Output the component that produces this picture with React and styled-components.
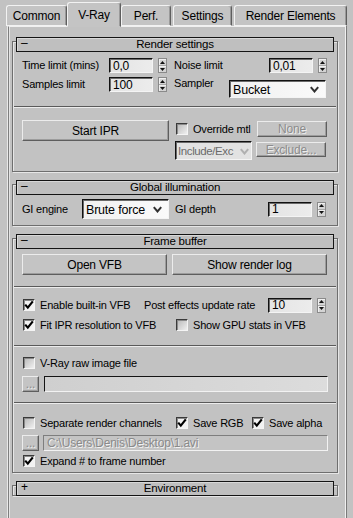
import React from 'react';
import styled, { createGlobalStyle } from 'styled-components';

const Global = createGlobalStyle`
  html, body { margin: 0; padding: 0; background: #c2c2c2; }
  body { font-family: "Liberation Sans", Arial, sans-serif; font-size: 11px; color: #000; overflow: hidden; letter-spacing: -0.2px; }
  * { box-sizing: border-box; }
`;

const Window = styled.div`
  width: 353px;
  height: 518px;
  background: #c2c2c2;
  display: flex;
  flex-direction: column;
  overflow: hidden;
`;

const TabBar = styled.div`
  display: flex;
  align-items: flex-end;
  height: 26px;
  padding-left: 5px;
  position: relative;
  z-index: 2;
`;

const Tab = styled.div`
  width: ${p => p.$w}px;
  height: ${p => (p.$active ? 25 : 21)}px;
  margin: 0 ${p => (p.$active ? -1 : 1)}px ${p => (p.$active ? -1 : 0)}px;
  display: flex;
  align-items: center;
  justify-content: center;
  padding-top: ${p => (p.$active ? 0 : 1)}px;
  font-size: 12px;
  background: #c4c4c4;
  border: 1px solid;
  border-color: #f2f2f2 #5e5e5e ${p => (p.$active ? '#c4c4c4' : '#f2f2f2')} #f2f2f2;
  border-radius: 3px 3px 0 0;
  box-shadow: inset -1px 0 0 #9a9a9a;
  position: relative;
  z-index: ${p => (p.$active ? 2 : 1)};
`;

const Panel = styled.div`
  flex: 1;
  width: 338px;
  margin-left: 8px;
  border-top: 1px solid #f0f0f0;
  border-left: 1px solid #7e7e7e;
  border-right: 1px solid #f0f0f0;
  box-shadow: inset 1px 0 0 #e4e4e4, -1px 0 0 #e8e8e8, 1px 0 0 #7a7a7a;
  padding: 10px 0 0 3px;
  display: flex;
  flex-direction: column;
`;

const Rollout = styled.section`
  position: relative;
  width: 326px;
  margin-bottom: ${p => p.$mb ?? 8}px;
  &::before {
    content: '';
    position: absolute;
    left: 0;
    right: 0;
    top: 4px;
    bottom: 0;
    border: 1px solid #6e6e6e;
    box-shadow: 1px 1px 0 #e6e6e6, inset 1px 1px 0 #e6e6e6;
    pointer-events: none;
  }
`;

const RollHeader = styled.div`
  position: relative;
  z-index: 1;
  margin: 0 4px;
  height: 15px;
  border: 1px solid #141414;
  background: #bfbfbf;
  box-shadow: inset 1px 1px 0 #d8d8d8;
  display: flex;
  align-items: center;
  justify-content: center;
  font-size: 11.5px;
  line-height: 13px;
`;

const Toggle = styled.span`
  position: absolute;
  left: 4px;
  top: -1px;
  font-size: 12px;
  font-weight: normal;
`;

const Body = styled.div`
  position: relative;
  padding: ${p => p.$pt}px 10px ${p => p.$pb}px;
  display: flex;
  flex-direction: column;
`;

const Row = styled.div`
  display: flex;
  align-items: ${p => p.$align || 'center'};
  height: ${p => p.$h || 16}px;
  margin-top: ${p => p.$mt || 0}px;
  gap: ${p => p.$gap || 0}px;
`;

const Cell = styled.div`
  display: flex;
  align-items: ${p => p.$align || 'center'};
  width: ${p => p.$w}px;
  flex: none;
  gap: ${p => p.$gap || 0}px;
  white-space: nowrap;
`;

const Col = styled.div`
  display: flex;
  flex-direction: column;
  width: ${p => p.$w}px;
  gap: ${p => p.$gap || 0}px;
  padding-top: ${p => p.$pt || 0}px;
`;

const Label = styled.span`
  display: inline-block;
  width: ${p => (p.$w ? `${p.$w}px` : 'auto')};
  flex: none;
  white-space: nowrap;
  line-height: 13px;
  color: ${p => (p.$dim ? '#808080' : '#000')};
`;

const Field = styled.div`
  width: ${p => p.$w}px;
  height: ${p => p.$h || 15}px;
  flex: none;
  border: 1px solid;
  border-color: #111 #f4f4f4 #f4f4f4 #111;
  box-shadow: inset 1px 1px 0 #6a6a6a;
  background: linear-gradient(90deg, #e4e4e4, #ececec);
  padding-left: 3px;
  display: flex;
  align-items: center;
  font-size: 12px;
  line-height: 12px;
`;

const GreyField = styled.div`
  flex: 1;
  height: ${p => p.$h || 16}px;
  border: 1px solid;
  border-color: ${p => (p.$dark ? '#151515' : '#7e7e7e')} #f2f2f2 #f2f2f2 ${p => (p.$dark ? '#151515' : '#7e7e7e')};
  background: ${p => (p.$dark ? 'linear-gradient(90deg, #cfcfcf, #dcdcdc)' : '#c4c4c4')};
  padding-left: 3px;
  display: flex;
  align-items: center;
  color: #8a8a8a;
  text-shadow: 1px 1px 0 #f2f2f2;
  font-size: 12px;
  white-space: nowrap;
  overflow: hidden;
`;

const SpinWrap = styled.div`
  width: 9px;
  height: 15px;
  flex: none;
  margin-left: 5px;
  display: flex;
  flex-direction: column;
  gap: 1px;
  border: 1px solid #8a8a8a;
  background: #a8a8a8;
`;

const SpinBtn = styled.div`
  flex: 1;
  background: #d4d4d4;
  display: flex;
  align-items: center;
  justify-content: center;
  box-shadow: inset 1px 1px 0 #f0f0f0;
`;

const SelectBox = styled.div`
  width: ${p => p.$w}px;
  height: ${p => p.$h}px;
  flex: none;
  margin-top: ${p => p.$mt || 0}px;
  border: 1px solid;
  border-color: #111 #f4f4f4 #f4f4f4 #111;
  box-shadow: inset 1px 1px 0 #6a6a6a;
  background: ${p => (p.$dim ? '#e2e2e2' : 'linear-gradient(90deg, #f0f0f0, #fafafa)')};
  color: ${p => (p.$dim ? '#6a6a6a' : '#000')};
  display: flex;
  align-items: center;
  justify-content: space-between;
  gap: 1px;
  padding: 1px ${p => (p.$dim ? 2 : 6)}px 0 ${p => (p.$dim ? 2 : 3)}px;
  font-size: ${p => (p.$dim ? 11.5 : 12.5)}px;
  letter-spacing: ${p => (p.$dim ? -0.4 : -0.2)}px;
  white-space: nowrap;
`;

const SelectText = styled.span`
  flex: 0 1 auto;
`;

const Button = styled.div`
  width: ${p => (p.$w ? `${p.$w}px` : 'auto')};
  height: ${p => p.$h || 21}px;
  flex: none;
  margin-top: ${p => p.$mt || 0}px;
  margin-left: ${p => p.$ml || 0}px;
  background: #c4c4c4;
  border: 1px solid;
  border-color: #ececec #5e5e5e #5e5e5e #ececec;
  box-shadow: inset -1px -1px 0 #9c9c9c;
  display: flex;
  align-items: center;
  justify-content: center;
  font-size: 12px;
  color: ${p => (p.$dim ? '#8c8c8c' : '#000')};
  text-shadow: ${p => (p.$dim ? '1px 1px 0 #ededed' : 'none')};
  white-space: nowrap;
`;

const CheckBox = styled.div`
  width: 12px;
  height: 12px;
  flex: none;
  margin: 0 5px 0 1px;
  border: 1px solid;
  border-color: #3a3a3a #f4f4f4 #f4f4f4 #3a3a3a;
  box-shadow: inset 1px 1px 0 #8a8a8a;
  background: ${p => (p.$on ? '#f2f2f2' : 'linear-gradient(135deg, #b8b8b8, #f0f0f0)')};
  display: flex;
  align-items: center;
  justify-content: center;
`;

const Separator = styled.div`
  height: 2px;
  margin: ${p => p.$mt}px -8px 0;
  border-top: 1px solid #5a5a5a;
  border-bottom: 1px solid #ececec;
`;

const Check = ({ on }) => (
  <CheckBox $on={on}>
    {on && (
      <svg width="10" height="10" viewBox="0 0 10 10">
        <path d="M1.2 4.6 L3.8 7.6 L8.8 1.4" fill="none" stroke="#000" strokeWidth="2.2" />
      </svg>
    )}
  </CheckBox>
);

const Spinner = () => (
  <SpinWrap>
    <SpinBtn>
      <svg width="5" height="3" viewBox="0 0 5 3"><path d="M0 3 L2.5 0 L5 3Z" fill="#111" /></svg>
    </SpinBtn>
    <SpinBtn>
      <svg width="5" height="3" viewBox="0 0 5 3"><path d="M0 0 L5 0 L2.5 3Z" fill="#111" /></svg>
    </SpinBtn>
  </SpinWrap>
);

const Chevron = ({ dim }) => (
  <svg width="9" height="7" viewBox="0 0 9 7" style={{ flex: 'none' }}>
    <polyline points="0.8,1.2 4.5,5.5 8.2,1.2" fill="none" stroke={dim ? '#b0b0b0' : '#303030'} strokeWidth="2" />
  </svg>
);

const NumField = ({ value }) => (
  <>
    <Field $w={44}>{value}</Field>
    <Spinner />
  </>
);

const Select = ({ w, h, mt, dim, children }) => (
  <SelectBox $w={w} $h={h} $mt={mt} $dim={dim}>
    <SelectText>{children}</SelectText>
    <Chevron dim={dim} />
  </SelectBox>
);

const Section = ({ title, open = true, pt, pb, mb, children }) => (
  <Rollout $mb={mb}>
    <RollHeader>
      <Toggle>{open ? '–' : '+'}</Toggle>
      {title}
    </RollHeader>
    {open && <Body $pt={pt} $pb={pb}>{children}</Body>}
  </Rollout>
);

const tabs = [
  { name: 'Common', w: 61 },
  { name: 'V-Ray', w: 54, active: true },
  { name: 'Perf.', w: 50 },
  { name: 'Settings', w: 59 },
  { name: 'Render Elements', w: 113 },
];

export default function App() {
  return (
    <Window>
      <Global />
      <TabBar>
        {tabs.map(t => (
          <Tab key={t.name} $w={t.w} $active={t.active}>{t.name}</Tab>
        ))}
      </TabBar>
      <Panel>
        <Section title="Render settings" pt={6} pb={12}>
          <Row $h={15} $gap={5}>
            <Cell $w={147}>
              <Label $w={87}>Time limit (mins)</Label>
              <NumField value="0,0" />
            </Cell>
            <Cell $w={152}>
              <Label $w={95}>Noise limit</Label>
              <NumField value="0,01" />
            </Cell>
          </Row>
          <Row $h={21} $mt={4} $gap={5} $align="flex-start">
            <Cell $w={147}>
              <Label $w={87}>Samples limit</Label>
              <NumField value="100" />
            </Cell>
            <Cell $w={152} $align="flex-start">
              <Label $w={55}>Sampler</Label>
              <Select w={97} h={18} mt={3}>Bucket</Select>
            </Cell>
          </Row>
          <Separator $mt={8} />
          <Row $h={40} $mt={12} $gap={6} $align="flex-start">
            <Button $w={147}>Start IPR</Button>
            <Col $w={152} $gap={4} $pt={1}>
              <Row $h={16}>
                <Check />
                <Label $w={64}>Override mtl</Label>
                <Button $w={70} $h={16} $dim>None</Button>
              </Row>
              <Row $h={19} $align="flex-start">
                <Select w={77} h={19} dim>Include/Exc</Select>
                <Button $w={70} $h={15} $mt={1} $ml={4} $dim>Exclude...</Button>
              </Row>
            </Col>
          </Row>
        </Section>

        <Section title="Global illumination" pt={4} pb={7}>
          <Row $h={20} $gap={6}>
            <Cell $w={147}>
              <Label $w={60}>GI engine</Label>
              <Select w={87} h={20}>Brute force</Select>
            </Cell>
            <Cell $w={152}>
              <Label $w={93}>GI depth</Label>
              <NumField value="1" />
            </Cell>
          </Row>
        </Section>

        <Section title="Frame buffer" pt={5} pb={4}>
          <Row $h={21} $gap={5}>
            <Button $w={145}>Open VFB</Button>
            <Button $w={155}>Show render log</Button>
          </Row>
          <Separator $mt={11} />
          <Row $mt={9}>
            <Cell $w={122}>
              <Check on />
              <Label>Enable built-in VFB</Label>
            </Cell>
            <Label $w={124}>Post effects update rate</Label>
            <NumField value="10" />
          </Row>
          <Row $mt={4}>
            <Cell $w={153}>
              <Check on />
              <Label>Fit IPR resolution to VFB</Label>
            </Cell>
            <Check />
            <Label>Show GPU stats in VFB</Label>
          </Row>
          <Separator $mt={12} />
          <Row $mt={8}>
            <Check />
            <Label>V-Ray raw image file</Label>
          </Row>
          <Row $mt={5} $gap={5}>
            <Button $w={17} $h={16} $dim>...</Button>
            <GreyField $dark />
          </Row>
          <Separator $mt={10} />
          <Row $mt={11}>
            <Cell $w={153}>
              <Check />
              <Label>Separate render channels</Label>
            </Cell>
            <Cell $w={76}>
              <Check on />
              <Label>Save RGB</Label>
            </Cell>
            <Check on />
            <Label>Save alpha</Label>
          </Row>
          <Row $mt={4} $gap={4}>
            <Button $w={17} $h={16} $dim>...</Button>
            <GreyField>C:\Users\Denis\Desktop\1.avi</GreyField>
          </Row>
          <Row $mt={2}>
            <Check on />
            <Label>Expand # to frame number</Label>
          </Row>
        </Section>

        <Section title="Environment" open={false} />
      </Panel>
    </Window>
  );
}
